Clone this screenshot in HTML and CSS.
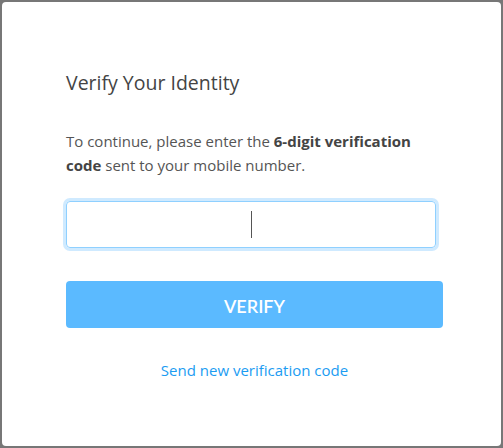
FILE: index.html
```html
<!DOCTYPE html>
<html>
<head>
<meta charset="utf-8">
<link rel="stylesheet" href="styles.css">
</head>
<body>
<div class="card">
  <h1 class="title">Verify Your Identity</h1>
  <p class="desc">To continue, please enter the <b>6-digit verification code</b> sent to your mobile number.</p>
  <div class="field"><span class="caret"></span></div>
  <button class="verify">VERIFY</button>
  <div class="resend"><a class="link" href="#">Send new verification code</a></div>
</div>
</body>
</html>
```
FILE: styles.css
```css
html, body { margin: 0; padding: 0; }
body {
  background: #777777;
  width: 503px;
  height: 448px;
  padding: 2px;
  box-sizing: border-box;
  font-family: "Open Sans", "Noto Sans", sans-serif;
}
.card {
  background: #ffffff;
  height: 444px;
  border-radius: 4px;
  box-sizing: border-box;
  padding: 66px 58px 0 64px;
}
.title {
  margin: 0;
  font-size: 19.5px;
  font-weight: 400;
  line-height: 30px;
  color: #444444;
}
.desc {
  margin: 31px 0 0 0;
  font-size: 15px;
  line-height: 24px;
  color: #555555;
  width: 360px;
}
.desc b { font-weight: 700; color: #444444; }
.field {
  margin-top: 24px;
  width: 370px;
  height: 47px;
  box-sizing: border-box;
  border: 1px solid #8fd0ff;
  border-radius: 4px;
  box-shadow: 0 0 0 3px #cfeaff;
  display: flex;
  align-items: center;
  justify-content: center;
}
.caret {
  display: block;
  width: 1px;
  height: 27px;
  background: #555555;
}
.verify {
  display: block;
  margin-top: 33px;
  width: 377px;
  height: 47px;
  border: none;
  border-radius: 4px;
  background: #5bbaff;
  color: #ffffff;
  font-family: Lato, "Open Sans", sans-serif;
  font-size: 18px;
  font-weight: 600;
  padding: 2px 0 0 0;
}
.resend {
  margin-top: 31px;
  width: 377px;
  text-align: center;
}
.link {
  color: #1b9cf2;
  text-decoration: none;
  font-size: 15px;
  line-height: 20px;
}
```
